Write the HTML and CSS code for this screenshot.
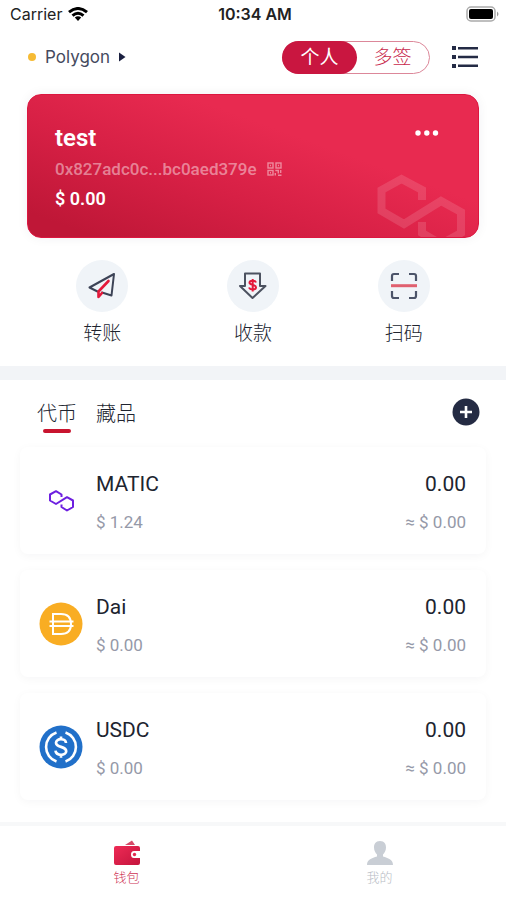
FILE: index.html
```html
<!DOCTYPE html>
<html lang="zh-CN">
<head>
<meta charset="utf-8">
<meta name="viewport" content="width=device-width, initial-scale=1">
<title>钱包</title>
<link rel="stylesheet" href="styles.css">
</head>
<body>
<div class="app">
  <div class="status">
    <div class="carrier">
      <span>Carrier</span>
      <svg width="20" height="14" viewBox="0 0 20 14" fill="none" stroke="#000" stroke-width="3"><path d="M1 5.2Q10-2.2 19 5.2M4.500 8.600Q10 4 15.500 8.600"/><path d="M6.800 10.500Q10 8 13.200 10.500L10 14Z" fill="#000" stroke="none"/></svg>
    </div>
    <time class="clock">10:34 AM</time>
    <div class="battery">
      <svg width="34" height="16" viewBox="0 0 34 16"><rect x="1" y="1" width="28" height="14" rx="4" fill="#fff" stroke="#aaa" stroke-width="1.500"/><rect x="3" y="3" width="24" height="10" rx="2"/><path d="M31 5.500q3 2.500 0 5z" fill="#999"/></svg>
    </div>
  </div>

  <header class="header">
    <button class="network" type="button">
      <span class="dot"></span>
      <span>Polygon</span>
      <svg width="7" height="10" viewBox="0 0 7 10"><path d="M0 0.500L6.500 5L0 9.500Z" fill="#1b2040"/></svg>
    </button>
    <div class="header-right">
      <div class="switch">
        <button class="switch-item active" type="button">个人</button>
        <button class="switch-item" type="button">多签</button>
      </div>
      <button class="icon-button" type="button" aria-label="菜单">
        <svg width="26" height="22" viewBox="0 0 26 22" fill="#242b45"><path d="M0 0h4v4H0zM6 1h20v2.500H6zM0 9h4v4H0zM6 9.800h20v2.500H6zM0 18h4v4H0zM6 18.600h20v2.500H6z"/></svg>
      </button>
    </div>
  </header>

  <main>
    <section class="wallet">
      <div class="wallet-top">
        <h1 class="wallet-name">test</h1>
        <button class="icon-button" type="button" aria-label="更多">
          <svg width="24" height="6" viewBox="0 0 24 6" fill="#fff"><circle cx="3" cy="3" r="2.700"/><circle cx="11.800" cy="3" r="2.700"/><circle cx="20.500" cy="3" r="2.700"/></svg>
        </button>
      </div>
      <div class="address">
        <span>0x827adc0c...bc0aed379e</span>
        <svg width="15" height="14" viewBox="0 0 15 14" fill="none" stroke="currentColor" stroke-width="1.400"><rect x="1" y="1" width="5" height="5"/><rect x="9" y="1" width="5" height="5"/><rect x="1" y="8.500" width="5" height="4.500"/><path d="M3 3.500h1M11 3.500h1M3 10.700h1M8.300 8.500h3v3M13.700 8v3M8.300 11v2.500M11 13.200h3.500"/></svg>
      </div>
      <p class="total">$ 0.00</p>
      <svg class="watermark" width="90" height="64" viewBox="0 0 90 64" fill="none" stroke="#fff" stroke-opacity=".13" stroke-width="8"><path d="M45 27V17L24.500 6L4.500 17V38L27 51L64 28L84 39V60L64 71L45 60V49"/></svg>
    </section>

    <nav class="actions" aria-label="操作">
      <button class="action" type="button">
        <span class="action-icon"><svg width="30" height="30" viewBox="0 0 30 30" fill="none" stroke="#3c4356" stroke-width="2" stroke-linejoin="round" stroke-linecap="round"><path d="M27 3L2.500 16.500L10.500 20.500M27 3L24.500 24.500L15 21.500"/><path d="M21.500 10L11.500 20.500V26L15 22" stroke="#e4193b" stroke-width="2.600"/></svg></span>
        <span>转账</span>
      </button>
      <button class="action" type="button">
        <span class="action-icon"><svg width="30" height="30" viewBox="0 0 30 30"><path d="M7 2.500H22V15H27.500L14.500 27L2 15H7Z" fill="none" stroke="#4c5260" stroke-width="2" stroke-linejoin="round"/><path d="M18 11.500C17 9 11.500 9 11.500 11.800C11.500 14.500 18 13.200 18 16.200C18 19.200 12 19 11 16.500M14.700 8V20.500" fill="none" stroke="#e4193b" stroke-width="2"/></svg></span>
        <span>收款</span>
      </button>
      <button class="action" type="button">
        <span class="action-icon"><svg width="28" height="28" viewBox="0 0 28 28" fill="none" stroke="#4c5469" stroke-width="2.200"><path d="M2 9V4Q2 2 4 2H9M19 2H24Q26 2 26 4V9M26 19V24Q26 26 24 26H19M9 26H4Q2 26 2 24V19"/><path d="M1 13.700H27" stroke="#e0606f" stroke-width="3"/></svg></span>
        <span>扫码</span>
      </button>
    </nav>

    <section class="assets">
      <div class="tabs">
        <button class="tab selected" type="button">代币</button>
        <button class="tab" type="button">藏品</button>
        <button class="icon-button add" type="button" aria-label="添加">
          <svg width="28" height="28" viewBox="0 0 28 28"><circle cx="14" cy="14" r="13.500" fill="#242b43"/><path d="M14 8V20M8 14H20" stroke="#fff" stroke-width="2.600"/></svg>
        </button>
      </div>
      <ul class="tokens">
        <li class="token">
          <svg class="logo" width="44" height="44" viewBox="0 0 44 44" fill="none" stroke="#6d1fe0" stroke-width="2" stroke-linejoin="round"><path d="M22.500 18V15.500L17 12.200L11 15.500V21.500L17 25L28 18.200L34 21.500V28L28 31.500L22.500 28V25.500"/></svg>
          <div class="info"><h2 class="symbol">MATIC</h2><p class="minor">$ 1.24</p></div>
          <div class="amount"><p class="symbol">0.00</p><p class="minor">≈ $ 0.00</p></div>
        </li>
        <li class="token">
          <svg class="logo" width="44" height="44" viewBox="0 0 44 44"><circle cx="22" cy="22" r="21.500" fill="#f9ad23"/><path d="M14 12H22Q32 12 32 22Q32 32 22 32H14ZM10.500 19.500H34.500M10.500 24H34.500" fill="none" stroke="#fff" stroke-width="2"/></svg>
          <div class="info"><h2 class="symbol">Dai</h2><p class="minor">$ 0.00</p></div>
          <div class="amount"><p class="symbol">0.00</p><p class="minor">≈ $ 0.00</p></div>
        </li>
        <li class="token">
          <svg class="logo" width="44" height="44" viewBox="0 0 44 44"><circle cx="22" cy="22" r="21.500" fill="#2170c9"/><path d="M17.500 7.500A15.300 15.300 0 0 0 17.500 36.500M26.500 7.500A15.300 15.300 0 0 1 26.500 36.500" fill="none" stroke="#fff" stroke-width="2.600"/><path d="M27 18C27 13 17 13 17 17.800C17 23 27.200 20.800 27.200 26.200C27.200 31.200 17 31 16.500 25.700M22 11.500V15M22 29V32.800" fill="none" stroke="#fff" stroke-width="2.700"/></svg>
          <div class="info"><h2 class="symbol">USDC</h2><p class="minor">$ 0.00</p></div>
          <div class="amount"><p class="symbol">0.00</p><p class="minor">≈ $ 0.00</p></div>
        </li>
      </ul>
    </section>
  </main>

  <nav class="bottom-nav" aria-label="主导航">
    <a class="nav-item current" href="#wallet">
      <svg width="28" height="26" viewBox="0 0 28 26"><defs><linearGradient id="walletFill" x2="1" y2="1"><stop stop-color="#ee2b55"/><stop offset="1" stop-color="#c4143d"/></linearGradient></defs><path d="M12 5L19 0.500L22 5Z" fill="#d74a68"/><path d="M3 6H25Q27 6 27 8V11H21Q18 11 18 14.500T21 18H27V23Q27 25 25 25H3Q1 25 1 23V8Q1 6 3 6Z" fill="url(#walletFill)"/><circle cx="21.500" cy="14.500" r="1.700" fill="#e12b50"/></svg>
      <span>钱包</span>
    </a>
    <a class="nav-item" href="#me">
      <svg width="28" height="26" viewBox="0 0 28 26" fill="#c9ced5"><path d="M14 1C9.500 1 8 4 8 7.500C8 10.500 9.500 13 11 14.500V16.500C6 18 1 19.500 1 25H27C27 19.500 22 18 17 16.500V14.500C18.500 13 20 10.500 20 7.500C20 4 18.500 1 14 1Z"/></svg>
      <span>我的</span>
    </a>
  </nav>
</div>
</body>
</html>
```
FILE: styles.css
```css
* {
  box-sizing: border-box;
}

body,
h1,
h2,
p,
ul {
  margin: 0;
  padding: 0;
}

body {
  background: #fff;
  color: #20242f;
  font-family: Roboto, "Noto Sans CJK SC", sans-serif;
}

button {
  padding: 0;
  border: 0;
  background: none;
  color: inherit;
  font: inherit;
  cursor: pointer;
}

svg {
  display: block;
  flex: none;
}

.app {
  display: flex;
  flex-direction: column;
  min-height: 100vh;
}

.status {
  display: grid;
  grid-template-columns: 1fr auto 1fr;
  align-items: center;
  height: 28px;
  padding: 0 6px 0 10px;
  font-family: Inter, sans-serif;
  font-size: 16px;
  color: #222;
}

.carrier {
  display: flex;
  align-items: center;
  gap: 6px;
}

.clock {
  font-weight: 600;
}

.battery {
  justify-self: end;
}

.header {
  display: flex;
  align-items: center;
  justify-content: space-between;
  height: 58px;
  padding: 0 28px;
}

.network {
  display: flex;
  align-items: center;
  gap: 9px;
  font-family: Inter, sans-serif;
  font-size: 17px;
  color: #454a5e;
}

.dot {
  width: 8px;
  height: 8px;
  border-radius: 50%;
  background: #f6bb35;
}

.header-right {
  display: flex;
  align-items: center;
  gap: 22px;
}

.switch {
  display: flex;
  height: 33px;
  border: 1px solid #dc8799;
  border-radius: 17px;
}

.switch-item {
  width: 75px;
  margin: -1px;
  border-radius: 17px;
  font-size: 19px;
  font-weight: 300;
  line-height: 34px;
  color: #c8284c;
}

.switch-item.active {
  background: #c91640;
  font-weight: 400;
  color: #fff;
}

.wallet {
  position: relative;
  margin: 8px 27px 0;
  padding: 27px 27px 23px;
  overflow: hidden;
  border: 1px solid #dc1740;
  border-radius: 14px;
  background: linear-gradient(20deg, #bf1737 8%, #d72045 38%, #e82a50 65%);
  box-shadow: 0 0 12px rgba(40, 40, 60, 0.06);
  color: #fff;
}

.wallet-top {
  display: flex;
  justify-content: space-between;
  padding-right: 12px;
}

.wallet-top .icon-button {
  height: 22px;
}

.wallet-name {
  font-size: 24px;
  font-weight: 600;
  line-height: 32px;
}

.address {
  display: flex;
  align-items: center;
  gap: 10px;
  font-size: 17px;
  font-weight: 500;
  line-height: 30px;
  color: rgba(255, 255, 255, 0.46);
}

.total {
  font-size: 18px;
  font-weight: 600;
  line-height: 30px;
}

.watermark {
  position: absolute;
  right: 11px;
  bottom: 0;
}

.actions {
  display: grid;
  grid-template-columns: repeat(3, 1fr);
  padding: 22px 27px 19px;
}

.action {
  display: flex;
  flex-direction: column;
  align-items: center;
  gap: 9px;
  font-size: 19px;
  font-weight: 300;
  line-height: 26px;
}

.action-icon {
  display: grid;
  place-items: center;
  width: 52px;
  height: 52px;
  border-radius: 50%;
  background: #f0f4f8;
}

.assets {
  padding: 9px 20px 22px;
  border-top: 14px solid #f2f4f7;
}

.tabs {
  display: flex;
  align-items: center;
  gap: 19px;
  height: 46px;
  padding: 0 6px 0 17px;
}

.tab {
  position: relative;
  height: 46px;
  font-size: 20px;
  font-weight: 300;
}

.tab.selected::after {
  content: "";
  position: absolute;
  bottom: 2px;
  left: 6px;
  right: 6px;
  height: 4px;
  border-radius: 2px;
  background: #c8142f;
}

.add {
  margin-left: auto;
}

.tokens {
  display: grid;
  gap: 16px;
  padding-top: 12px;
  list-style: none;
}

.token {
  display: flex;
  align-items: center;
  gap: 13px;
  height: 107px;
  padding: 0 20px 0 19px;
  border-radius: 8px;
  box-shadow: 0 2px 10px rgba(30, 30, 50, 0.04);
}

.info,
.amount {
  padding-top: 4px;
}

.info {
  flex: 1;
}

.amount {
  text-align: right;
}

.symbol {
  font-size: 21px;
  font-weight: 400;
  line-height: 38px;
}

.minor {
  font-size: 17px;
  line-height: 38px;
  color: #9599a8;
}

.bottom-nav {
  display: grid;
  grid-template-columns: 1fr 1fr;
  flex: 1;
  border-top: 4px solid #f7f8f9;
}

.nav-item {
  display: flex;
  flex-direction: column;
  align-items: center;
  gap: 2px;
  padding-top: 14px;
  font-size: 13px;
  font-weight: 300;
  line-height: 20px;
  color: #b8bdc5;
  text-decoration: none;
}

.nav-item.current {
  color: #ce3455;
}
```
